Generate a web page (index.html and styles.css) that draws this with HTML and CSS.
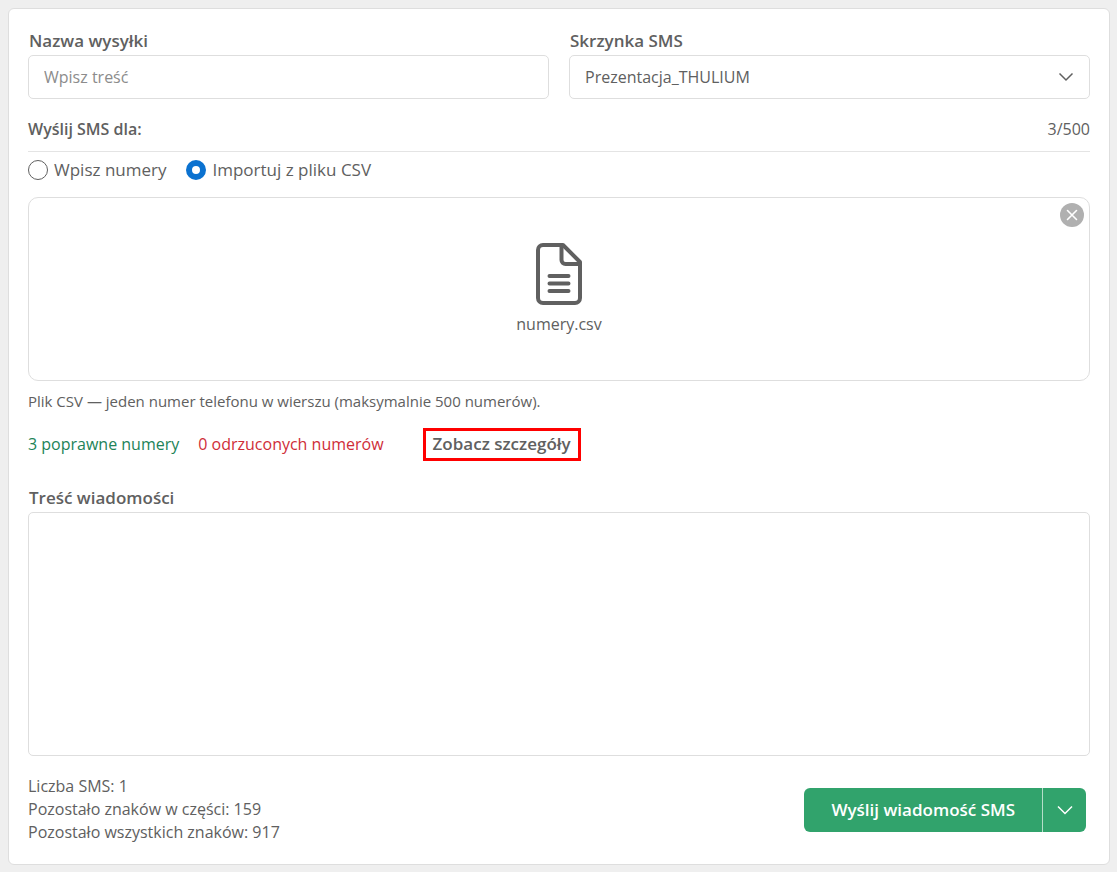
FILE: index.html
```
<!DOCTYPE html>
<html lang="pl">
<head>
    <meta charset="UTF-8">
    <meta name="viewport" content="width=device-width, initial-scale=1.0">
    <title>Wysyłka SMS</title>

    <link rel="stylesheet" href="styles.css">
</head>
<body>
    <form class="card">
        <div class="fields">
            <div class="field">
                <label class="field-label" for="name">Nazwa wysyłki</label>
                <input class="control" type="text" id="name" placeholder="Wpisz treść">
            </div>
            <div class="field">
                <label class="field-label" for="box">Skrzynka SMS</label>
                <div class="select-wrap">
                    <select class="control" id="box">
                        <option>Prezentacja_THULIUM</option>
                    </select>
                    <svg class="select-arrow" width="16" height="16" viewBox="0 0 16 16" fill="none" stroke="currentColor" stroke-width="1.5">
                        <path d="M1.5 4.5L8 11l6.5-6.5"/>
                    </svg>
                </div>
            </div>
        </div>

        <div class="section-head">
            <span class="section-title">Wyślij SMS dla:</span>
            <span>3/500</span>
        </div>

        <div class="radios">
            <label class="radio"><input type="radio" name="source">Wpisz numery</label>
            <label class="radio"><input type="radio" name="source" checked>Importuj z pliku CSV</label>
        </div>

        <div class="dropzone">
            <button class="remove" type="button" aria-label="Usuń plik">
                <svg width="12" height="12" viewBox="0 0 12 12" stroke="currentColor" stroke-width="1.6" stroke-linecap="round">
                    <path d="M1.5 1.5l9 9M10.5 1.5l-9 9"/>
                </svg>
            </button>
            <svg width="46" height="62" viewBox="0 0 46 62" fill="none" stroke="currentColor" stroke-width="4" stroke-linecap="round" stroke-linejoin="round">
                <path d="M7 2h20l17 17v36a5 5 0 0 1-5 5H7a5 5 0 0 1-5-5V7a5 5 0 0 1 5-5z"/>
                <path d="M25.5 3v14a4 4 0 0 0 4 4H43"/>
                <path d="M13.5 33h19M13.5 40.5h19M13.5 48h19"/>
            </svg>
            <span class="file-name">numery.csv</span>
        </div>
        <p class="hint">Plik CSV — jeden numer telefonu w wierszu (maksymalnie 500 numerów).</p>

        <div class="result">
            <span class="ok">3 poprawne numery</span>
            <span class="rejected">0 odrzuconych numerów</span>
            <button class="details" type="button">Zobacz szczegóły</button>
        </div>

        <div class="field">
            <label class="field-label" for="message">Treść wiadomości</label>
            <textarea class="message" id="message"></textarea>
        </div>

        <div class="bottom">
            <div class="stats">
                <div>Liczba SMS: 1</div>
                <div>Pozostało znaków w części: 159</div>
                <div>Pozostało wszystkich znaków: 917</div>
            </div>
            <div class="send">
                <button class="send-main" type="submit">Wyślij wiadomość SMS</button>
                <button class="send-more" type="button" aria-label="Więcej opcji">
                    <svg width="16" height="16" viewBox="0 0 16 16" fill="none" stroke="currentColor" stroke-width="1.5">
                        <path d="M1 4.5l7 7 7-7"/>
                    </svg>
                </button>
            </div>
        </div>
    </form>
</body>
</html>
```
FILE: styles.css
```
* {
    box-sizing: border-box;
    margin: 0;
    padding: 0;
}

body {
    background-color: #efefef;
    padding: 8px 7px 8px 8px;
    color: #606060;
    font-family: "Open Sans", "Noto Sans", sans-serif;
    font-size: 16px;
    line-height: 24px;
}

button, input, select, textarea {
    color: inherit;
    font: inherit;
}

button {
    border: none;
    cursor: pointer;
}

.card {
    background-color: white;
    border: 1px solid #dedede;
    border-radius: 6px;
    padding: 20px 19px;
}

.fields {
    display: grid;
    grid-template-columns: 1fr 1fr;
    gap: 20px;
}

.field {
    display: flex;
    flex-direction: column;
    gap: 2px;
}

.field-label {
    padding-left: 1px;
    font-size: 17px;
    font-weight: 600;
}

.control {
    width: 100%;
    height: 44px;
    padding: 0 15px;
    background-color: white;
    border: 1px solid #dedede;
    border-radius: 5px;
    appearance: none;
}

.control::placeholder {
    color: #8c8c8c;
}

.select-wrap {
    position: relative;
}

.select-arrow {
    position: absolute;
    top: 14px;
    right: 16px;
    pointer-events: none;
}

.section-head {
    display: flex;
    justify-content: space-between;
    margin-top: 18px;
    padding-bottom: 10px;
    border-bottom: 1px solid #e4e4e4;
}

.section-title {
    font-weight: 600;
}

.radios {
    display: flex;
    gap: 20px;
    margin: 6px 0 15px;
    font-size: 17px;
}

.radio {
    display: flex;
    align-items: center;
    gap: 6px;
}

.radio input {
    width: 20px;
    height: 20px;
    border: 1px solid #606060;
    border-radius: 50%;
    appearance: none;
}

.radio input:checked {
    border: 6px solid #0b72d0;
}

.dropzone {
    position: relative;
    display: flex;
    flex-direction: column;
    align-items: center;
    height: 184px;
    padding-top: 45px;
    border: 1px solid #dedede;
    border-radius: 10px;
}

.file-name {
    margin-top: 7px;
}

.remove {
    position: absolute;
    top: 5px;
    right: 5px;
    display: flex;
    align-items: center;
    justify-content: center;
    width: 24px;
    height: 24px;
    border-radius: 50%;
    background-color: #b0b0b0;
    color: white;
}

.hint {
    margin-top: 8px;
    font-size: 15px;
}

.result {
    display: flex;
    align-items: baseline;
    margin: 15px 0 25px;
}

.ok {
    color: #228358;
}

.rejected {
    margin-left: 19px;
    color: #cf2e38;
}

.details {
    margin-left: 39px;
    padding: 1px 7px 2px;
    background: none;
    border: 3px solid #ff0000;
    font-size: 17px;
    font-weight: 600;
}

.message {
    display: block;
    width: 100%;
    height: 244px;
    padding: 10px 15px;
    border: 1px solid #dedede;
    border-radius: 5px;
    resize: none;
}

.bottom {
    display: flex;
    align-items: center;
    justify-content: space-between;
    margin-top: 19px;
    padding-right: 4px;
}

.stats {
    line-height: 23px;
}

.send {
    display: flex;
    height: 44px;
    border-radius: 6px;
    overflow: hidden;
    color: white;
}

.send button {
    background-color: #31a36c;
}

.send-main {
    padding: 0 27px;
    font-size: 17px;
    font-weight: 600;
}

.send-more {
    display: flex;
    align-items: center;
    justify-content: center;
    width: 44px;
    border-left: 1px solid #b5dec9;
}
```
